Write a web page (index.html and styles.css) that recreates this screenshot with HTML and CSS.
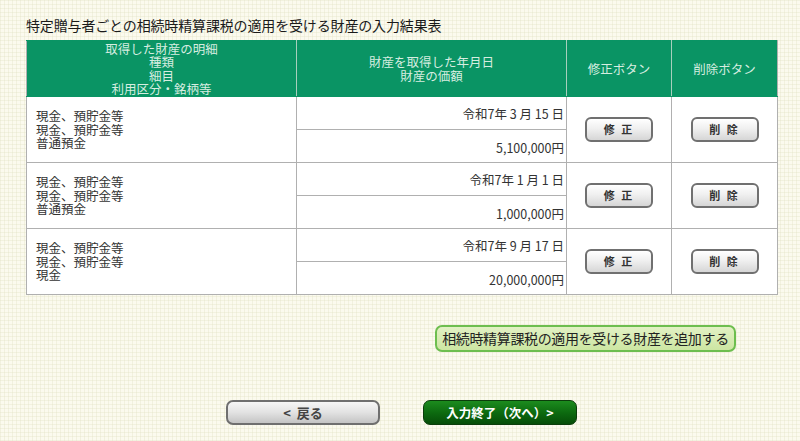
FILE: index.html
```html
<!DOCTYPE html>
<html lang="ja">
<head>
<meta charset="utf-8">
<link rel="stylesheet" href="styles.css">
</head>
<body>
<div class="page">
  <h1 class="title">特定贈与者ごとの相続時精算課税の適用を受ける財産の入力結果表</h1>
  <table class="result">
    <colgroup>
      <col class="c1"><col class="c2"><col class="c3"><col class="c4">
    </colgroup>
    <thead>
      <tr>
        <th class="h1">取得した財産の明細<br>種類<br>細目<br>利用区分・銘柄等</th>
        <th>財産を取得した年月日<br>財産の価額</th>
        <th>修正ボタン</th>
        <th>削除ボタン</th>
      </tr>
    </thead>
    <tbody>
      <tr>
        <td class="item" rowspan="2">現金、預貯金等<br>現金、預貯金等<br>普通預金</td>
        <td class="date">令和7年 3 月 15 日</td>
        <td class="btncell" rowspan="2"><button class="small">修 正</button></td>
        <td class="btncell" rowspan="2"><button class="small">削 除</button></td>
      </tr>
      <tr><td class="price">5,100,000円</td></tr>
      <tr>
        <td class="item" rowspan="2">現金、預貯金等<br>現金、預貯金等<br>普通預金</td>
        <td class="date">令和7年 1 月 1 日</td>
        <td class="btncell" rowspan="2"><button class="small">修 正</button></td>
        <td class="btncell" rowspan="2"><button class="small">削 除</button></td>
      </tr>
      <tr><td class="price">1,000,000円</td></tr>
      <tr>
        <td class="item" rowspan="2">現金、預貯金等<br>現金、預貯金等<br>現金</td>
        <td class="date">令和7年 9 月 17 日</td>
        <td class="btncell" rowspan="2"><button class="small">修 正</button></td>
        <td class="btncell" rowspan="2"><button class="small">削 除</button></td>
      </tr>
      <tr><td class="price">20,000,000円</td></tr>
    </tbody>
  </table>
  <div class="addrow">
    <button class="add">相続時精算課税の適用を受ける財産を追加する</button>
  </div>
  <div class="navrow">
    <button class="back">&lt;&nbsp;&nbsp;戻る</button>
    <button class="next">入力終了（次へ）&gt;</button>
  </div>
</div>
</body>
</html>
```
FILE: styles.css
```css
html, body {
  margin: 0;
  padding: 0;
}
body {
  background-color: #fbfaee;
  background-image:
    repeating-linear-gradient(0deg, rgba(225,225,195,0.35) 0 1px, transparent 1px 4px),
    repeating-linear-gradient(90deg, rgba(225,225,195,0.35) 0 1px, transparent 1px 4px);
  font-family: "Noto Sans CJK JP", "Noto Sans", sans-serif;
  color: #333;
  width: 800px;
  height: 441px;
  overflow: hidden;
}
.page {
  padding: 15px 0 0 26px;
}
.title {
  margin: 0 0 5px 0;
  font-size: 14px;
  line-height: 20px;
  font-weight: normal;
  color: #1a1a1a;
  letter-spacing: -0.15px;
}
.result {
  border-collapse: collapse;
  width: 751px;
  table-layout: fixed;
  background: #fff;
  border: 1px solid #b0b0b0;
}
.c1 { width: 270px; }
.c2 { width: 270px; }
.c3 { width: 105px; }
.c4 { width: 106px; }
.result th {
  background: #0a9464;
  color: #d6ede0;
  font-weight: normal;
  font-size: 12.5px;
  line-height: 13.4px;
  height: 55px;
  padding: 0;
  text-align: center;
  vertical-align: middle;
  border: 1px solid #b0b0b0;
  border-top: 1px solid #0a9464;
  border-bottom: 1px solid #0a9464;
  border-left-color: #a8cfbd;
  border-right-color: #a8cfbd;
}
.result th:first-child { border-left-color: #b0b0b0; }
.result th:last-child { border-right-color: #b0b0b0; }
.result td {
  border: 1px solid #b0b0b0;
  padding: 0;
  font-size: 12.5px;
  color: #333;
}
.item {
  padding-left: 9px !important;
  line-height: 13.5px;
  vertical-align: middle;
  text-align: left;
}
.date {
  height: 32px;
  text-align: right;
  padding-right: 2px !important;
  vertical-align: middle;
}
.price {
  height: 33px;
  text-align: right;
  padding-right: 2px !important;
  padding-top: 3px !important;
  box-sizing: border-box;
  vertical-align: middle;
}
.btncell {
  text-align: center;
  vertical-align: middle;
}
button {
  font-family: "Noto Sans CJK JP", "Noto Sans", sans-serif;
  cursor: pointer;
  padding: 0;
}
.small {
  width: 68px;
  height: 25px;
  border: 2px solid #707070;
  border-radius: 6px;
  background: linear-gradient(#ffffff, #f0f0f0 45%, #d6d6d6);
  box-shadow: inset 0 1px 0 #fff;
  font-size: 11px;
  font-weight: bold;
  color: #333;
  letter-spacing: 2px;
  line-height: 21px;
}
.addrow {
  width: 710px;
  display: flex;
  justify-content: flex-end;
  margin-top: 30px;
}
.add {
  width: 301px;
  height: 27px;
  border: 2px solid #6dbe4f;
  border-radius: 7px;
  background: linear-gradient(#e2f1c4, #cce6a2);
  font-size: 14px;
  letter-spacing: -0.35px;
  color: #222;
  line-height: 23px;
}
.navrow {
  display: flex;
  gap: 43px;
  margin-top: 48px;
  margin-left: 200px;
}
.back {
  width: 154px;
  height: 25px;
  border: 2px solid #6f6f6f;
  border-radius: 7px;
  background: linear-gradient(#f6f6f6, #e2e2e2 50%, #c4c4c4);
  font-size: 13px;
  font-weight: bold;
  color: #444;
  line-height: 21px;
}
.next {
  width: 154px;
  height: 25px;
  border: 1px solid #0b3d0b;
  border-radius: 7px;
  background: linear-gradient(#1c8c1e, #0d6b10 50%, #064d08);
  font-size: 12.5px;
  font-weight: bold;
  color: #fff;
  line-height: 23px;
}
```
